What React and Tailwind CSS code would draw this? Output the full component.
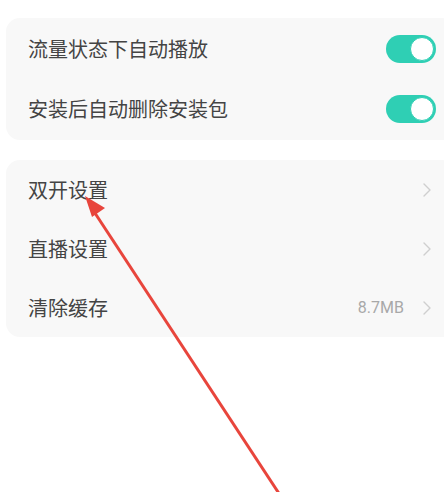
import React from 'react';

const font = { fontFamily: '"Noto Sans CJK SC", "Noto Sans", sans-serif' };

const Toggle = () => (
  <div className="w-[50px] h-[28px] rounded-full bg-[#2fcfb4] flex items-center justify-end pr-[2px]">
    <div className="w-[24px] h-[24px] rounded-full bg-white border border-[#2fcfb4]" />
  </div>
);

const Chevron = () => (
  <svg width="10" height="16" viewBox="0 0 10 16" fill="none">
    <path d="M2 2l6 6-6 6" stroke="#cfcfcf" strokeWidth="1.4" strokeLinecap="round" strokeLinejoin="round" />
  </svg>
);

const Row = ({ label, right, h = 'h-[60px]' }) => (
  <div className={`${h} flex items-center justify-between pl-[22px] pr-[12px]`}>
    <span className="text-[20px] text-[#444] leading-none">{label}</span>
    {right}
  </div>
);

export default function App() {
  const toggles = ['流量状态下自动播放', '安装后自动删除安装包'];
  const links = [
    { label: '双开设置' },
    { label: '直播设置' },
    { label: '清除缓存', value: '8.7MB' },
  ];

  return (
    <div className="relative w-[444px] h-[492px] bg-white overflow-hidden pt-[18px] pl-[6px]" style={font}>
      <div className="bg-[#f8f8f8] rounded-l-[14px] rounded-r-[6px] py-[1px] mr-[-4px]">
        {toggles.map(t => (
          <Row key={t} label={t} right={<Toggle />} />
        ))}
      </div>
      <div className="mt-[20px] bg-[#f8f8f8] rounded-l-[14px] rounded-r-[6px] mr-[-4px]">
        {links.map(l => (
          <Row
            key={l.label}
            label={l.label}
            h="h-[59px]"
            right={
              <div className="flex items-center gap-[18px] pr-[4px]">
                {l.value && <span className="text-[16px] text-[#a8a8a8]" style={{ fontFamily: 'Roboto, sans-serif' }}>{l.value}</span>}
                <Chevron />
              </div>
            }
          />
        ))}
      </div>

      {/* annotation arrow */}
      <svg className="absolute left-0 top-0" width="444" height="492" viewBox="0 0 444 492">
        <line x1="91" y1="207" x2="280" y2="495" stroke="#e8453c" strokeWidth="3" />
        <polygon points="85,196 105,208 92,217" fill="#e8453c" />
      </svg>
    </div>
  );
}
